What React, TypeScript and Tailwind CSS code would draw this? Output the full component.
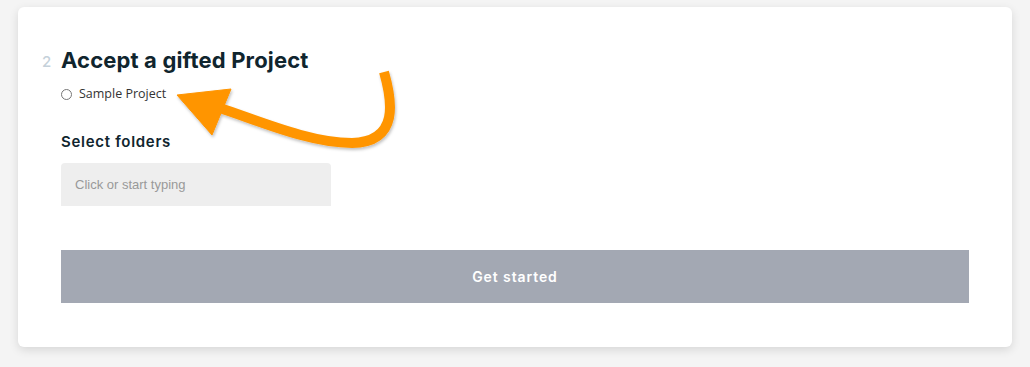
import React from "react";

export default function App() {
  return (
    <div className="w-[1030px] h-[367px] bg-[#f4f4f4] pt-[7px] pl-[18px]" style={{ fontFamily: "Inter, 'Noto Sans', sans-serif" }}>
      <div className="relative w-[994px] h-[340px] bg-white rounded-[6px] shadow-[0_3px_10px_rgba(0,0,0,0.12)] pt-[39px] pl-[24px]">
        <div className="flex items-start">
          <span className="w-[19px] text-[15px] font-medium text-[#c5d1da] mt-[5px]">2</span>
          <div className="flex flex-col">
            <h1 className="text-[22px] font-bold text-[#10252e] leading-[28px] tracking-[0.15px]">Accept a gifted Project</h1>
            <label className="flex items-center mt-[12px] gap-[7px]">
              <span className="w-[11px] h-[11px] rounded-full border border-[#777] bg-white" />
              <span className="text-[12.5px] text-[#333] leading-[16px]" style={{ fontFamily: "'Open Sans', sans-serif" }}>Sample Project</span>
            </label>
            <h2 className="text-[15px] font-semibold text-[#10252e] mt-[30px] leading-[20px] tracking-[0.7px]">Select folders</h2>
            <div className="w-[270px] h-[43px] bg-[#eeeeee] rounded-t-[4px] mt-[11px] flex items-center pl-[14px]">
              <span className="text-[13px] text-[#999]" style={{ fontFamily: "'Liberation Sans', Arial, sans-serif" }}>Click or start typing</span>
            </div>
          </div>
        </div>
        <div className="ml-[19px] mt-[44px] w-[908px] h-[53px] bg-[#a3a8b3] flex items-center justify-center">
          <span className="text-white text-[14px] font-semibold tracking-[0.9px]">Get started</span>
        </div>
        <svg className="absolute left-0 top-0 pointer-events-none" width="994" height="340" viewBox="18 7 994 340">
          <defs>
            <filter id="sh" x="-20%" y="-20%" width="140%" height="140%">
              <feDropShadow dx="1" dy="2" stdDeviation="1.5" floodColor="#000" floodOpacity="0.25" />
            </filter>
          </defs>
          <g filter="url(#sh)" fill="#ff9500" stroke="#ff9500">
            <path d="M 384 72 C 392 100, 400 142, 352 143 C 310 143, 262 122, 220 108" fill="none" strokeWidth="10" />
            <polygon points="177,95 231,89 212,135" strokeWidth="1" strokeLinejoin="round" />
          </g>
        </svg>
      </div>
    </div>
  );
}
